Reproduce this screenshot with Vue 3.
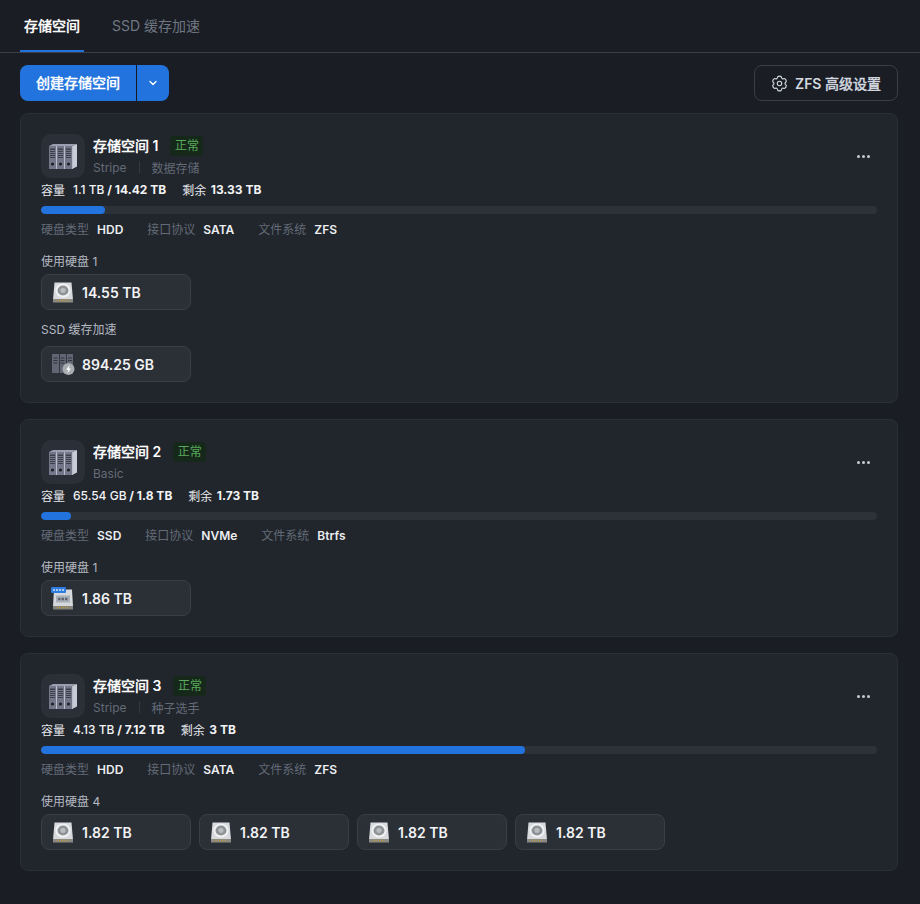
<script setup>
const pools = [
  { name: '存储空间', no: '1', level: 'Stripe', tag: '数据存储', used: '1.1 TB', total: '14.42 TB', free: '13.33 TB', pct: 7.6,
    type: 'HDD', proto: 'SATA', fs: 'ZFS',
    groups: [
      { label: '使用硬盘 1', kind: 'hdd', disks: ['14.55 TB'] },
      { label: 'SSD 缓存加速', kind: 'cache', disks: ['894.25 GB'] }
    ] },
  { name: '存储空间', no: '2', level: 'Basic', tag: '', used: '65.54 GB', total: '1.8 TB', free: '1.73 TB', pct: 3.6,
    type: 'SSD', proto: 'NVMe', fs: 'Btrfs',
    groups: [{ label: '使用硬盘 1', kind: 'ssd', disks: ['1.86 TB'] }] },
  { name: '存储空间', no: '3', level: 'Stripe', tag: '种子选手', used: '4.13 TB', total: '7.12 TB', free: '3 TB', pct: 57.9,
    type: 'HDD', proto: 'SATA', fs: 'ZFS',
    groups: [{ label: '使用硬盘 4', kind: 'hdd', disks: ['1.82 TB', '1.82 TB', '1.82 TB', '1.82 TB'] }] }
]

const pt = (r, deg) => {
  const a = (deg * Math.PI) / 180
  return `${(12 + r * Math.cos(a)).toFixed(2)} ${(12 + r * Math.sin(a)).toFixed(2)}`
}
let d = `M${pt(10.6, -105)} `
for (let k = 0; k < 6; k++) {
  const c = k * 60 - 90
  d += `Q${pt(12.4, c)} ${pt(10.6, c + 15)} Q${pt(6.6, c + 30)} ${pt(10.6, c + 45)} `
}
const gearPath = d + 'Z'
</script>

<template>
  <div class="page">
    <div class="tabs">
      <div class="tab active">存储空间</div>
      <div class="tab">SSD 缓存加速</div>
    </div>
    <div class="toolbar">
      <div class="split">
        <div class="btn-main">创建存储空间</div>
        <div class="btn-arrow">
          <svg width="10" height="10" viewBox="0 0 10 10" fill="none"><path d="M2 3.6 5 6.4 8 3.6" stroke="#fff" stroke-width="1.4" stroke-linecap="round" stroke-linejoin="round"/></svg>
        </div>
      </div>
      <div class="btn-zfs">
        <svg width="17" height="17" viewBox="-1 -1 26 26" fill="none" stroke="#d5dae1" stroke-width="1.7" stroke-linejoin="round"><path :d="gearPath"/><circle cx="12" cy="12" r="3.4"/></svg>
        <span class="zfs-label">ZFS <span class="cjk-bold">高级设置</span></span>
      </div>
    </div>
    <div class="list">
      <section v-for="p in pools" :key="p.no" class="card">
        <div class="head">
          <div class="pool-icon">
            <svg width="28" height="26" viewBox="0 0 28 26">
              <path d="M23 3 28 1v22.500l-5 2.500z" fill="#c9ccd6"/>
              <path d="M0 3 4 1h24l-5 2z" fill="#9a9eae"/>
              <g v-for="x in [0, 8, 16]" :key="x" :transform="`translate(${x} 0)`">
                <rect y="3" width="7" height="23" fill="#73778a"/>
                <rect x="7" y="3" width="1" height="23" fill="#b9bcc9"/>
                <rect x="1" y="5.500" width="5" height="9.500" fill="#3d404d"/>
                <path d="M1 7.500h5M1 9.500h5M1 11.500h5M1 13.500h5" stroke="#8a8e9e" stroke-width=".7"/>
                <circle cx="3.500" cy="21" r="1.600" fill="#1f2128"/>
              </g>
            </svg>
          </div>
          <div class="head-text">
            <div class="title-row">
              <span class="title"><span class="cjk-bold">{{ p.name }}</span> {{ p.no }}</span>
              <span class="badge">正常</span>
            </div>
            <div class="sub">
              <span>{{ p.level }}</span>
              <template v-if="p.tag">
                <i class="sep"></i>
                <span>{{ p.tag }}</span>
              </template>
            </div>
          </div>
          <div class="more"><b></b><b></b><b></b></div>
        </div>
        <div class="capacity">
          <span class="cjk">容量</span>
          <span class="val"><em>{{ p.used }}</em> / {{ p.total }}</span>
          <span class="cjk gap">剩余</span>
          <span class="val free">{{ p.free }}</span>
        </div>
        <div class="bar"><div class="fill" :style="{ width: p.pct + '%' }"></div></div>
        <div class="meta">
          <span class="pair"><span class="k">硬盘类型</span><strong>{{ p.type }}</strong></span>
          <span class="pair"><span class="k">接口协议</span><strong>{{ p.proto }}</strong></span>
          <span class="pair"><span class="k">文件系统</span><strong>{{ p.fs }}</strong></span>
        </div>
        <div v-for="g in p.groups" :key="g.label" class="group" :class="{ cache: g.kind === 'cache' }">
          <div class="group-label">{{ g.label }}</div>
          <div class="disks">
            <div v-for="(d, i) in g.disks" :key="i" class="disk">
              <svg v-if="g.kind === 'hdd'" width="24" height="24" viewBox="0 0 24 24">
                <path d="M3.500 2.500h17l1.500 17.500H2z" fill="#d8dadd"/>
                <rect x="2" y="19" width="20" height="3.500" fill="#8b8a82"/>
                <path d="M6 20.500h12" stroke="#b5953f" stroke-width="1.400" stroke-dasharray="1 1"/>
                <ellipse cx="12" cy="10.500" rx="7.500" ry="7" fill="#f1f2f3"/>
                <ellipse cx="12" cy="10.500" rx="5.500" ry="5.100" fill="#8f9296"/>
                <ellipse cx="12" cy="10.500" rx="2.600" ry="2.400" fill="#b9bcbf"/>
              </svg>
              <svg v-else-if="g.kind === 'ssd'" width="24" height="24" viewBox="0 0 24 24">
                <path d="M3 3.500h18l1 17H2z" fill="#d5d8dc"/>
                <rect x="0" y="1" width="15" height="6" rx="1" fill="#2f7ce0"/>
                <path d="M2 4h11" stroke="#cfe2fb" stroke-width="1.600" stroke-dasharray="2 1"/>
                <rect x="5" y="9.500" width="14" height="7" fill="#aab0b8"/>
                <path d="M7 13h10" stroke="#5e6570" stroke-width="2.400" stroke-dasharray="2.500 1"/>
                <rect x="2" y="20" width="20" height="3.500" fill="#85847c"/>
                <path d="M6 21.500h12" stroke="#b5953f" stroke-width="1.400" stroke-dasharray="1 1"/>
              </svg>
              <svg v-else width="24" height="24" viewBox="0 0 24 24">
                <rect x="1" y="2" width="21" height="19" fill="#626573"/>
                <rect x="8" y="2" width="1" height="19" fill="#33363f"/>
                <rect x="15" y="2" width="1" height="19" fill="#33363f"/>
                <path d="M2.500 6h4M2.500 8.500h4M2.500 11h4M9.500 6h4M9.500 8.500h4M9.500 11h4M17 6h4M17 8.500h4" stroke="#33363f" stroke-width="1.200"/>
                <circle cx="17.500" cy="17" r="6" fill="#a9acb1"/>
                <path d="M18.800 12.800 15.200 17.800h2.100l-1 3.700 3.600-5h-2.100z" fill="#fff"/>
              </svg>
              <span>{{ d }}</span>
            </div>
          </div>
        </div>
      </section>
    </div>
  </div>
</template>

<style scoped>
.page {
  width: 920px;
  height: 904px;
  box-sizing: border-box;
  background: #1a1d23;
  font-family: Inter, "Noto Sans CJK SC", sans-serif;
  color: #e6e8eb;
  overflow: hidden;
}
.cjk-bold {
  font-weight: 400;
  -webkit-text-stroke: 0.5px currentColor;
}
.tabs {
  height: 53px;
  box-sizing: border-box;
  display: flex;
  gap: 8px;
  padding-left: 20px;
  border-bottom: 1px solid #3a3e45;
}
.tab {
  height: 52px;
  box-sizing: border-box;
  padding: 17px 4px 0;
  font-size: 14px;
  line-height: 17px;
  color: #6f7783;
  border-bottom: 2px solid transparent;
  margin-right: 16px;
}
.tab.active {
  color: #fff;
  -webkit-text-stroke: 0.5px #fff;
  border-bottom-color: #2273dd;
  width: 64px;
  text-align: center;
  padding-left: 0;
  padding-right: 0;
}
.toolbar {
  display: flex;
  justify-content: space-between;
  padding: 12px 22px 12px 20px;
}
.split {
  display: flex;
  height: 36px;
  border-radius: 8px;
  overflow: hidden;
  background: #2273dd;
  color: #fff;
  font-size: 14px;
  line-height: 35px;
}
.btn-main {
  width: 116px;
  text-align: center;
  border-right: 1px solid #15181d;
  -webkit-text-stroke: 0.5px #fff;
}
.btn-arrow {
  width: 32px;
  display: flex;
  align-items: center;
  justify-content: center;
}
.btn-zfs {
  height: 36px;
  width: 144px;
  box-sizing: border-box;
  border: 1px solid #3a3e45;
  border-radius: 8px;
  display: flex;
  align-items: center;
  justify-content: center;
  gap: 7px;
  font-size: 14px;
  color: #d5dae1;
}
.zfs-label {
  font-weight: 600;
}
.list {
  display: flex;
  flex-direction: column;
  gap: 16px;
  padding: 0 22px 0 20px;
}
.card {
  box-sizing: border-box;
  border: 1px solid #2b2f36;
  border-radius: 8px;
  background: #21252c;
  padding: 20px;
}
.head {
  display: flex;
  align-items: flex-start;
  height: 44px;
}
.pool-icon {
  width: 44px;
  height: 44px;
  border-radius: 10px;
  background: #2b2f37;
  display: flex;
  align-items: center;
  justify-content: center;
  margin-right: 8px;
}
.head-text {
  flex: 1;
  margin-top: -1px;
}
.title-row {
  display: flex;
  align-items: center;
  height: 24px;
}
.title {
  font-size: 14px;
  font-weight: 600;
  color: #fff;
}
.badge {
  margin: 2px 0 0 12px;
  width: 33px;
  height: 20px;
  border-radius: 4px;
  background: #15281a;
  color: #5aa95c;
  font-size: 12px;
  line-height: 20px;
  text-align: center;
}
.sub {
  display: flex;
  align-items: center;
  height: 20px;
  font-size: 12px;
  color: #636b77;
}
.sep {
  width: 1px;
  height: 12px;
  background: #343841;
  margin: 0 12px;
}
.more {
  display: flex;
  gap: 2px;
  margin: 21px 7px 0 0;
}
.more b {
  width: 3px;
  height: 3px;
  border-radius: 50%;
  background: #c6cbd2;
}
.capacity {
  display: flex;
  align-items: center;
  height: 20px;
  margin-top: 1px;
  font-size: 12px;
  color: #e6e8eb;
}
.val {
  margin-left: 8px;
  font-weight: 700;
  color: #f2f3f5;
}
.val.free {
  margin-left: 4.500px;
}
.val em {
  font-style: normal;
  font-weight: 500;
}
.gap {
  margin-left: 16px;
}
.bar {
  height: 8px;
  margin-top: 7px;
  border-radius: 4px;
  background: #2d3138;
  overflow: hidden;
}
.fill {
  height: 100%;
  border-radius: 4px;
  background: #2273dd;
}
.meta {
  display: flex;
  gap: 24px;
  height: 20px;
  margin-top: 4px;
  align-items: center;
  font-size: 12px;
}
.k {
  color: #636b77;
  margin-right: 8px;
}
.pair strong {
  color: #eceef0;
  font-weight: 600;
}
.group {
  margin-top: 14px;
}
.group.cache {
  margin-top: 10px;
}
.group-label {
  height: 20px;
  line-height: 20px;
  font-size: 12px;
  color: #b4b9c1;
  margin-bottom: 2px;
}
.group.cache .group-label {
  margin-bottom: 6px;
}
.disks {
  display: flex;
  gap: 8px;
}
.disk {
  width: 150px;
  height: 36px;
  box-sizing: border-box;
  border: 1px solid #3a3e46;
  border-radius: 8px;
  background: #2b2f36;
  display: flex;
  align-items: center;
  padding-left: 9px;
  gap: 7px;
  font-size: 14px;
  font-weight: 600;
  color: #f2f3f5;
}
</style>

<style>
html, body { background: #1a1d23; }
</style>
